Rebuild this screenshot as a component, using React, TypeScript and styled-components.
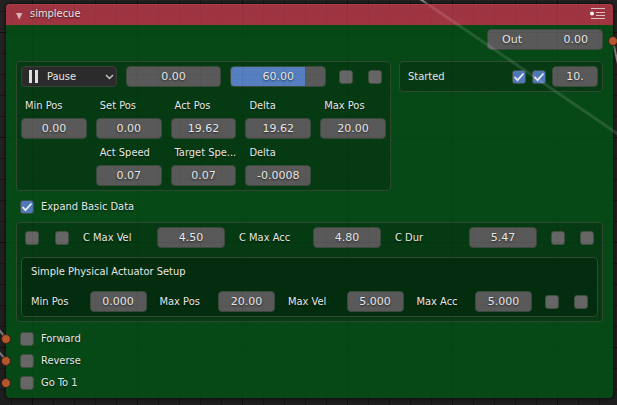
import React, { useState } from "react";
import styled, { createGlobalStyle } from "styled-components";

const GlobalStyle = createGlobalStyle`
  * { box-sizing: border-box; }
  html { min-height: 100%; background: #222; }
  body { margin: 0; }
  body, input, select, button {
    font-family: "DejaVu Sans Condensed", "DejaVu Sans", sans-serif;
    font-size: 11px;
    line-height: 16px;
    color: #e6e6e6;
  }
`;

const Canvas = styled.main`
  position: relative;
  min-height: 100vh;
  overflow: hidden;
  display: flex;
  flex-direction: column;
  padding: 4px 4px 7px 6px;
  background: linear-gradient(#232323, #1e1e1e);
`;

const GridLines = styled.div<{ $alpha: number }>`
  position: absolute;
  inset: 0;
  pointer-events: none;
  background-image:
    linear-gradient(90deg, rgba(0, 0, 0, ${p => p.$alpha}) 1px, transparent 1px),
    linear-gradient(rgba(0, 0, 0, ${p => p.$alpha}) 1px, transparent 1px),
    linear-gradient(90deg, rgba(0, 0, 0, ${p => p.$alpha}) 1px, transparent 1px),
    linear-gradient(rgba(0, 0, 0, ${p => p.$alpha}) 1px, transparent 1px);
  background-size: 21px 21px, 21px 21px, 105px 105px, 105px 105px;
  background-position: 11px 11px, 11px 11px, 32px 32px, 32px 32px;
`;

const Links = styled.svg<{ $side: "left" | "right" }>`
  position: absolute;
  top: 0;
  ${p => p.$side}: 0;
  pointer-events: none;
`;

const Node = styled.section`
  position: relative;
  flex: 1;
  border-radius: 4px;
  background: #074817;
  box-shadow: 0 0 3px 1px rgba(0, 0, 0, 0.55);
`;

const Header = styled.header`
  display: flex;
  align-items: center;
  gap: 7px;
  height: 21px;
  padding: 0 8px 0 9px;
  border-radius: 4px 4px 0 0;
  background: #9f3541;
  box-shadow: inset 0 1px #ab3d49;
`;

const Title = styled.h1`
  flex: 1;
  margin: 0;
  font-size: 11px;
  font-weight: 400;
  line-height: 16px;
  padding-bottom: 2px;
  text-shadow: 0 1px 2px rgba(0, 0, 0, 0.6);
`;

const IconButton = styled.button`
  display: flex;
  padding: 0;
  border: 0;
  background: none;
`;

const Body = styled.div`
  display: flex;
  flex-direction: column;
  padding: 4px 10px;
`;

const Columns = styled.div`
  display: grid;
  grid-template-columns: 375fr 204fr;
  align-items: start;
  gap: 8px;
  margin-top: 11px;
`;

const Panel = styled.section<{ $deep?: boolean }>`
  padding: 4px;
  border: 1px solid #2f4a31;
  border-radius: 4px;
  background: ${p => (p.$deep ? "#042c0e" : "#053a13")};
`;

const Row = styled.div<{ $gap: number; $inset?: number }>`
  display: flex;
  align-items: center;
  gap: ${p => p.$gap}px;
  padding: 0 ${p => p.$inset ?? 0}px;
`;

const Field = styled.input`
  width: 100%;
  min-width: 0;
  height: 21px;
  padding: 0 4px;
  border: 1px solid #3c4a3d;
  border-radius: 4px;
  background: #595959;
  font-family: "DejaVu Sans", sans-serif;
  text-align: center;
  text-shadow: 0 1px 2px rgba(0, 0, 0, 0.6);
  outline: none;
`;

const OutField = styled.label`
  align-self: flex-end;
  display: flex;
  align-items: center;
  width: 116px;
  height: 21px;
  padding: 0 14px;
  border: 1px solid #3c4a3d;
  border-radius: 4px;
  background: #595959;
  font-family: "DejaVu Sans", sans-serif;
  text-shadow: 0 1px 2px rgba(0, 0, 0, 0.6);
`;

const OutValue = styled.input`
  flex: 1;
  width: 0;
  padding: 0;
  border: 0;
  background: none;
  font-family: inherit;
  text-align: right;
  text-shadow: inherit;
  outline: none;
`;

const ModeBox = styled.div`
  position: relative;
  flex: 1;
  display: flex;
  svg { position: absolute; top: 4px; pointer-events: none; }
  svg:first-child { left: 7px; }
  svg:last-child { right: 3px; }
`;

const ModeSelect = styled.select`
  appearance: none;
  width: 100%;
  height: 21px;
  padding: 0 18px 0 25px;
  border: 1px solid #3a403a;
  border-radius: 4px;
  background: #2b2b2b;
`;

const Grow = styled.div`
  flex: 1;
  display: flex;
`;

const SliderBox = styled.div`
  position: relative;
  flex: 1;
  display: flex;
`;

const Slider = styled.input<{ $fill: number }>`
  appearance: none;
  width: 100%;
  height: 21px;
  margin: 0;
  border: 1px solid #3c4a3d;
  border-radius: 4px;
  background: linear-gradient(90deg, #557fc1 ${p => p.$fill}%, #595959 ${p => p.$fill}%);
  &::-webkit-slider-thumb { appearance: none; width: 1px; height: 19px; background: none; }
`;

const SliderValue = styled.output`
  position: absolute;
  inset: 0;
  font-family: "DejaVu Sans", sans-serif;
  line-height: 21px;
  text-align: center;
  text-shadow: 0 1px 2px rgba(0, 0, 0, 0.7);
  pointer-events: none;
`;

const Checks = styled.div<{ $gap: number }>`
  display: flex;
  gap: ${p => p.$gap}px;
`;

const TickBox = styled.span`
  display: grid;
  width: 14px;
  height: 14px;
  > * { grid-area: 1 / 1; }
  svg { pointer-events: none; }
`;

const Tick = styled.input`
  appearance: none;
  width: 14px;
  height: 14px;
  margin: 0;
  border: 1px solid #3f4f41;
  border-radius: 3px;
  background: #666;
  &:checked { background: #5079ba; }
`;

const Readings = styled.div`
  display: grid;
  grid-template-columns: repeat(5, 1fr);
  gap: 9px;
  row-gap: 6px;
  margin-top: 11px;
`;

const Reading = styled.label<{ $column?: number }>`
  grid-column: ${p => p.$column ?? "auto"};
  display: flex;
  flex-direction: column;
  gap: 4px;
  min-width: 0;
`;

const Caption = styled.span`
  padding-left: 4px;
  white-space: nowrap;
  text-shadow: 0 1px 2px rgba(0, 0, 0, 0.6);
`;

const Pair = styled.label<{ $split: string }>`
  flex: 1;
  display: grid;
  grid-template-columns: ${p => p.$split};
  align-items: center;
  white-space: nowrap;
  text-shadow: 0 1px 2px rgba(0, 0, 0, 0.6);
`;

const PanelTitle = styled.h2`
  margin: 2px 5px 11px;
  font-size: 11px;
  font-weight: 400;
  line-height: 16px;
`;

const Started = styled.label`
  flex: 1;
  padding-left: 4px;
`;

const ShortField = styled(Field)`
  width: 46px;
`;

const CheckLabel = styled.label<{ $tall?: boolean }>`
  position: relative;
  display: flex;
  align-items: center;
  gap: 7px;
  height: ${p => (p.$tall ? 31 : 22)}px;
  padding-left: 4px;
  text-shadow: 0 1px 2px rgba(0, 0, 0, 0.6);
`;

const Inputs = styled.div`
  margin-top: 6px;
`;

const Socket = styled.i<{ $side: "left" | "right" }>`
  position: absolute;
  ${p => p.$side}: ${p => (p.$side === "left" ? -15 : -5)}px;
  width: 10px;
  height: 10px;
  border: 1px solid #3a2013;
  border-radius: 50%;
  background: #b3562a;
`;

const OutSocket = styled(Socket)`
  top: 32px;
`;

const Stack = styled.div`
  display: flex;
  flex-direction: column;
  gap: 9px;
`;

const CheckMark = () => (
  <svg width="14" height="14" viewBox="0 0 14 14" fill="none" stroke="#e8ecf2" strokeWidth="1.800">
    <path d="M2.500 7 5.500 10.200 11.500 3.500" />
  </svg>
);

function Check({ label, id, initial = false }: { label?: string; id?: string; initial?: boolean }) {
  const [on, setOn] = useState(initial);
  return (
    <TickBox>
      <Tick type="checkbox" id={id} aria-label={label} checked={on} onChange={e => setOn(e.target.checked)} />
      {on && <CheckMark />}
    </TickBox>
  );
}

const readings: { label: string; value: string; column?: number }[] = [
  { label: "Min Pos", value: "0.00" },
  { label: "Set Pos", value: "0.00" },
  { label: "Act Pos", value: "19.62" },
  { label: "Delta", value: "19.62" },
  { label: "Max Pos", value: "20.00" },
  { label: "Act Speed", value: "0.07", column: 2 },
  { label: "Target Spe...", value: "0.07" },
  { label: "Delta", value: "-0.0008" },
];

const cueLimits = [["C Max Vel", "4.50"], ["C Max Acc", "4.80"], ["C Dur", "5.47"]];
const setupLimits = [["Min Pos", "0.000"], ["Max Pos", "20.00"], ["Max Vel", "5.000"], ["Max Acc", "5.000"]];
const maxTarget = 76;

export default function App() {
  const [target, setTarget] = useState(60);
  return (
    <>
      <GlobalStyle />
      <Canvas>
        <GridLines $alpha={0.3} />
        <Links $side="left" width="8" height="405" stroke="#777" strokeWidth="2">
          <path d="M-1 330 6 338M-1 352 6 360" />
        </Links>
        <Links $side="right" width="200" height="140" stroke="#8a8a8a" strokeWidth="2" fill="none">
          <path d="M3-1 12 5M196 40Q198 52 201 64" />
        </Links>
        <Node>
          <Header>
            <IconButton aria-label="Collapse node">
              <svg width="8" height="16" viewBox="0 0 8 16"><path d="M1 6h6.400L4.200 12.500z" fill="#d5b5b8" /></svg>
            </IconButton>
            <Title>simplecue</Title>
            <IconButton aria-label="Node options">
              <svg width="16" height="13" viewBox="0 0 16 13" stroke="#dcbfc2" fill="none">
                <path d="M2 .5h14M7 4.500h9M7 7.500h9M2 10.500h14" />
                <circle cx="3" cy="5.500" r="2" fill="#fff" stroke="none" />
              </svg>
            </IconButton>
          </Header>
          <Body>
            <OutField>Out<OutValue defaultValue="0.00" /></OutField>
            <Columns>
              <Panel>
                <Row $gap={9}>
                  <ModeBox>
                    <svg width="12" height="13" viewBox="0 0 12 13" fill="#e0e0e0"><path d="M1 0h3v13H1zM7 0h3v13H7z" /></svg>
                    <ModeSelect aria-label="Mode"><option>Pause</option></ModeSelect>
                    <svg width="9" height="13" viewBox="0 0 9 13" fill="none" stroke="#c8c8c8" strokeWidth="1.400"><path d="M1 5 4.500 8.500 8 5" /></svg>
                  </ModeBox>
                  <Grow><Field aria-label="Position" defaultValue="0.00" /></Grow>
                  <SliderBox>
                    <Slider type="range" aria-label="Speed" min={0} max={maxTarget} value={target} $fill={(target / maxTarget) * 100}
                      onChange={e => setTarget(Number(e.target.value))} />
                    <SliderValue>{target.toFixed(2)}</SliderValue>
                  </SliderBox>
                  <Row $gap={15} $inset={4}>
                    <Check label="Position option" />
                    <Check label="Speed option" />
                  </Row>
                </Row>
                <Readings>
                  {readings.map((r, i) => (
                    <Reading key={i} $column={r.column}>
                      <Caption>{r.label}</Caption>
                      <Field defaultValue={r.value} />
                    </Reading>
                  ))}
                </Readings>
              </Panel>
              <Panel>
                <Row $gap={6}>
                  <Started htmlFor="started">Started</Started>
                  <Check id="started" initial />
                  <Check label="Started enabled" initial />
                  <ShortField aria-label="Started value" defaultValue="10." />
                </Row>
              </Panel>
            </Columns>
            <CheckLabel $tall><Check initial />Expand Basic Data</CheckLabel>
            <Panel>
              <Stack>
                <Row $gap={14} $inset={4}>
                  <Checks $gap={16}><Check label="Velocity option" /><Check label="Acceleration option" /></Checks>
                  {cueLimits.map(([label, value]) => (
                    <Pair key={label} $split="75fr 69fr">{label}<Field defaultValue={value} /></Pair>
                  ))}
                  <Checks $gap={15}><Check label="Duration option" /><Check label="Duration lock" /></Checks>
                </Row>
                <Panel $deep>
                  <PanelTitle>Simple Physical Actuator Setup</PanelTitle>
                  <Row $gap={13} $inset={5}>
                    {setupLimits.map(([label, value]) => (
                      <Pair key={label} $split="59fr 57fr">{label}<Field defaultValue={value} /></Pair>
                    ))}
                    <Checks $gap={15}><Check label="Setup option" /><Check label="Setup lock" /></Checks>
                  </Row>
                </Panel>
              </Stack>
            </Panel>
            <Inputs>
              {["Forward", "Reverse", "Go To 1"].map(name => (
                <CheckLabel key={name}><Socket $side="left" /><Check />{name}</CheckLabel>
              ))}
            </Inputs>
          </Body>
          <OutSocket $side="right" />
        </Node>
        <Links $side="right" width="200" height="140" stroke="#fff" strokeOpacity="0.12" strokeWidth="3" fill="none">
          <path d="M12 5 201 134" />
        </Links>
        <GridLines $alpha={0.03} />
      </Canvas>
    </>
  );
}
